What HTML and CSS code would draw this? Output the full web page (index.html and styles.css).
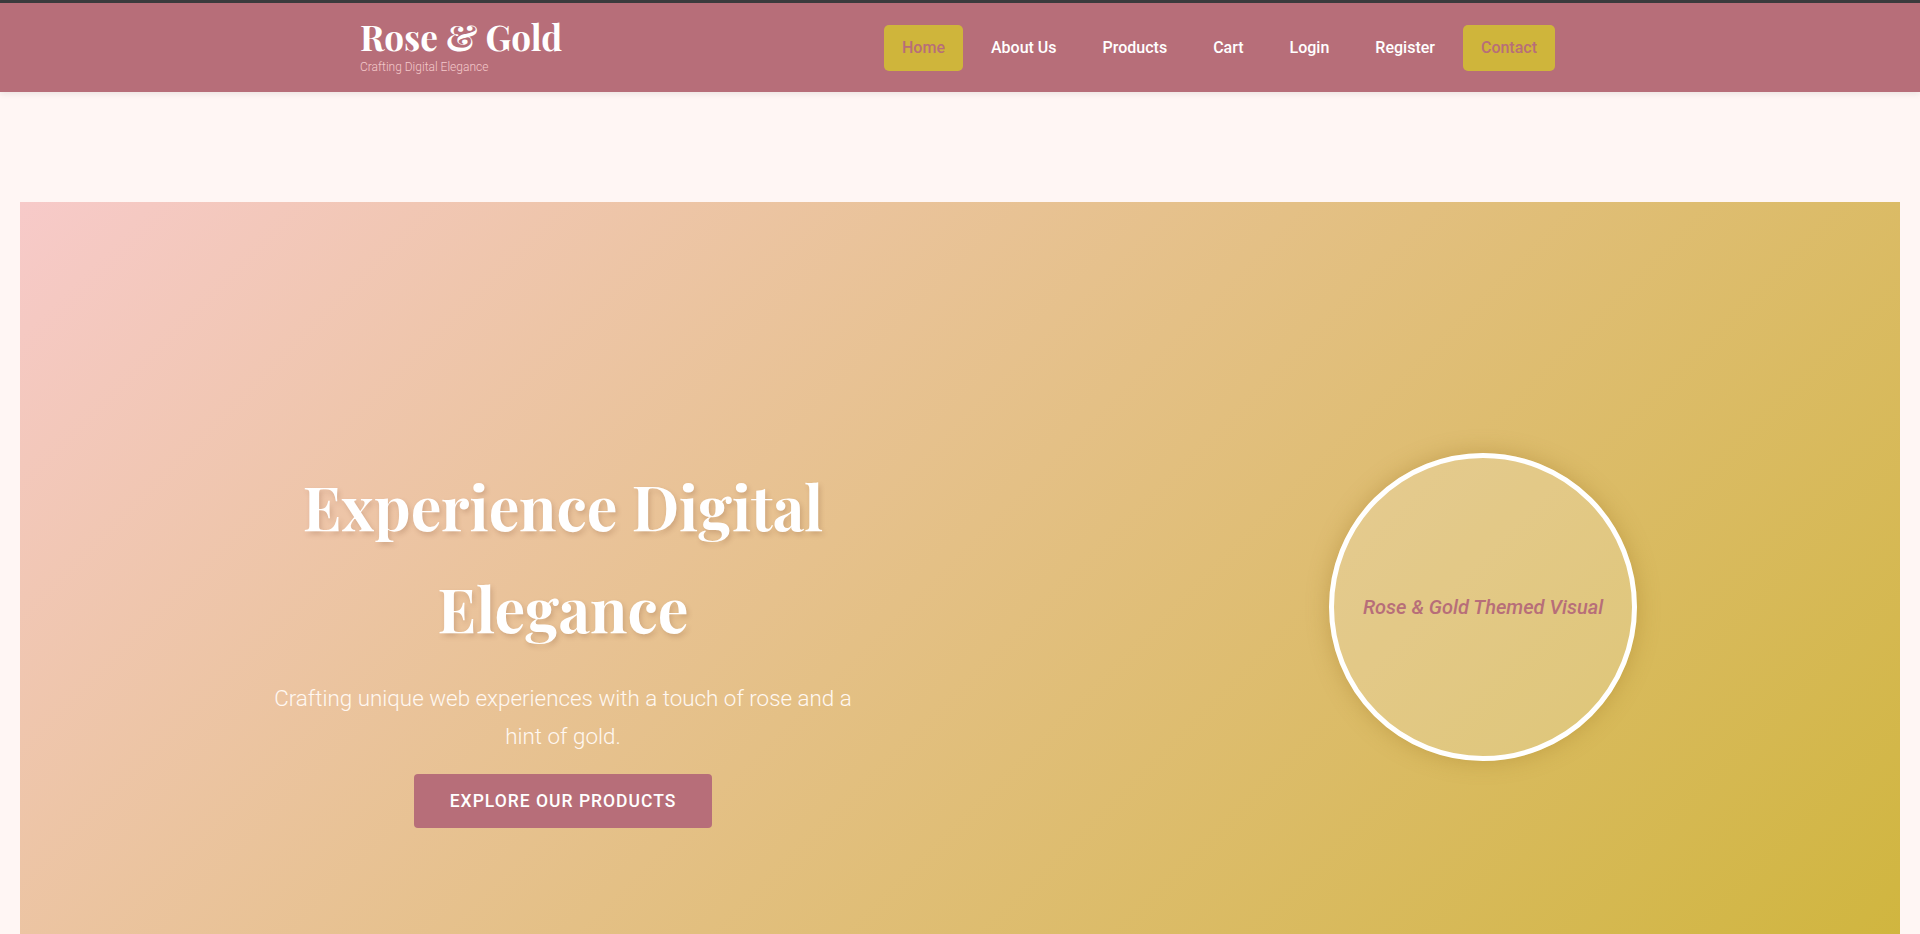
FILE: index.html
```html
<!DOCTYPE html>
<html lang="en">
<head>
<meta charset="UTF-8">
<title>Rose &amp; Gold</title>
<link rel="stylesheet" href="styles.css">
</head>
<body>
<div class="topbar"></div>
<header class="site-header">
  <div class="container header-inner">
    <div class="logo">
      <div class="logo-title">Rose &amp; Gold</div>
      <div class="logo-tagline">Crafting Digital Elegance</div>
    </div>
    <nav class="nav">
      <a class="nav-link active" href="#">Home</a>
      <a class="nav-link" href="#">About Us</a>
      <a class="nav-link" href="#">Products</a>
      <a class="nav-link" href="#">Cart</a>
      <a class="nav-link" href="#">Login</a>
      <a class="nav-link" href="#">Register</a>
      <a class="nav-link active" href="#">Contact</a>
    </nav>
  </div>
</header>
<main class="main">
  <section class="hero">
    <div class="hero-content">
      <h1 class="hero-title">Experience Digital Elegance</h1>
      <p class="hero-text">Crafting unique web experiences with a touch of rose and a hint of gold.</p>
      <a class="btn" href="#">Explore Our Products</a>
    </div>
    <div class="hero-visual">
      <div class="circle"><span>Rose &amp; Gold Themed Visual</span></div>
    </div>
  </section>
</main>
</body>
</html>
```
FILE: styles.css
```css
* { box-sizing: border-box; }
html, body { margin: 0; padding: 0; }
body {
  background: #fff6f4;
  font-family: Roboto, "Liberation Sans", sans-serif;
  overflow: hidden;
}
.topbar { height: 3px; background: #3c3c3e; }
.site-header {
  background: #b76e79;
  height: 89px;
  box-shadow: 0 2px 6px rgba(0,0,0,0.08);
  position: relative;
  z-index: 2;
}
.container { max-width: 1200px; margin: 0 auto; }
.header-inner {
  height: 100%;
  display: flex;
  align-items: center;
  justify-content: space-between;
}
.logo { margin-top: -5px; }
.logo-title {
  font-family: "Playfair Display", "Liberation Serif", serif;
  font-weight: 700;
  font-size: 35px;
  line-height: 40px;
  color: #fff;
}
.logo-tagline {
  font-size: 12px;
  font-weight: 300;
  color: #f4c9cb;
  line-height: 14px;
  margin-top: 3px;
}
.nav { display: flex; gap: 10px; align-items: center; margin-right: 5px; }
.nav-link {
  color: #fff;
  text-decoration: none;
  font-size: 16px;
  font-weight: 500;
  line-height: 22px;
  padding: 12px 18px;
  border-radius: 5px;
}
.nav-link.active { background: #cfb53b; color: #b76e79; }
.main { padding: 110px 20px 0; }
.hero {
  height: 810px;
  display: flex;
  align-items: center;
  justify-content: space-around;
  padding: 0 20px;
  background: linear-gradient(135deg, #f7cac9 0%, #cfb53b 100%);
}
.hero-content {
  width: 600px;
  text-align: center;
  padding-top: 68px;
}
.hero-title {
  margin: 0 0 20px;
  font-family: "Playfair Display", "Liberation Serif", serif;
  font-weight: 700;
  font-size: 61px;
  line-height: 102px;
  color: #fff;
  text-shadow: 2px 3px 5px rgba(120, 70, 40, 0.22);
}
.hero-text {
  margin: 0 auto 19px;
  max-width: 600px;
  font-size: 22.4px;
  font-weight: 300;
  line-height: 38px;
  color: #fff8f2;
}
.btn {
  display: inline-block;
  background: #b76e79;
  color: #fff;
  text-decoration: none;
  text-transform: uppercase;
  font-size: 17.5px;
  font-weight: 500;
  letter-spacing: 1px;
  line-height: 22px;
  padding: 16px 36px;
  border-radius: 4px;
}
.hero-visual {
  width: 348px;
  display: flex;
  justify-content: center;
}
.circle {
  width: 308px;
  height: 308px;
  border-radius: 50%;
  border: 5px solid #fff;
  background: rgba(255, 255, 255, 0.2);
  box-shadow: 0 0 22px rgba(150, 110, 30, 0.35);
  display: flex;
  align-items: center;
  justify-content: center;
}
.circle span {
  font-style: italic;
  font-weight: 500;
  font-size: 20px;
  color: #b76e79;
}
```
